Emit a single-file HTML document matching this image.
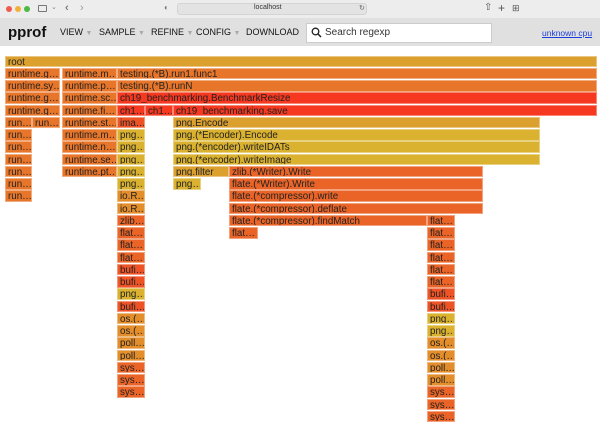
<!DOCTYPE html>
<html><head><meta charset="utf-8"><style>
*{margin:0;padding:0;box-sizing:border-box}
body{width:600px;height:428px;overflow:hidden;background:#fff;font-family:"Liberation Sans",sans-serif;position:relative}
.tb{position:absolute;left:0;top:0;width:600px;height:18px;background:#ededed}
.hd{position:absolute;left:0;top:18px;width:600px;height:28px;background:#e0e0e0}
.f{position:absolute;height:11.5px;font-size:9.8px;line-height:11.5px;padding-left:2px;color:#222;white-space:nowrap;overflow:hidden;border:0.5px solid rgba(255,255,255,.4)}
.t{position:absolute;font-size:9px;color:#111}
.m{position:absolute;top:27px;font-size:9px;color:#111}
.a{color:#aaa;font-size:7px}
</style></head><body>
<div class="tb"></div>
<div style="position:absolute;left:6px;top:6px;width:6px;height:6px;border-radius:50%;background:#ee5a50"></div>
<div style="position:absolute;left:15px;top:6px;width:6px;height:6px;border-radius:50%;background:#f2b03a"></div>
<div style="position:absolute;left:24px;top:6px;width:6px;height:6px;border-radius:50%;background:#4cb944"></div>
<div style="position:absolute;left:38px;top:5px;width:9px;height:7px;border:1px solid #777;border-radius:1px"></div>
<div class="t" style="left:51px;top:3px;color:#888;font-size:7px">⌄</div>
<div class="t" style="left:65px;top:2px;color:#555;font-size:11px">‹</div>
<div class="t" style="left:80px;top:2px;color:#999;font-size:11px">›</div>
<div class="t" style="left:164px;top:3px;color:#777;font-size:8px">◐</div>
<div style="position:absolute;left:177px;top:3px;width:190px;height:12px;background:#e3e3e3;border-radius:3px;border:0.5px solid #d4d4d4"></div>
<div class="t" style="left:254px;top:4px;font-size:7px;color:#333">localhost</div>
<div class="t" style="left:359px;top:4px;font-size:7px;color:#666">↻</div>
<div class="t" style="left:484px;top:2px;font-size:10px;color:#555">⇧</div>
<div class="t" style="left:498px;top:1px;font-size:12px;color:#555">+</div>
<div class="t" style="left:512px;top:3px;font-size:9px;color:#555">⊞</div>
<div class="hd"></div>
<div style="position:absolute;left:8px;top:24px;font-size:15px;font-weight:bold;color:#111">pprof</div>
<div class="m" style="left:60px">VIEW <span class="a">▼</span></div>
<div class="m" style="left:99px">SAMPLE <span class="a">▼</span></div>
<div class="m" style="left:151px">REFINE <span class="a">▼</span></div>
<div class="m" style="left:196px">CONFIG <span class="a">▼</span></div>
<div class="m" style="left:246px">DOWNLOAD</div>
<div style="position:absolute;left:306px;top:23px;width:186px;height:20px;background:#fff;border:0.5px solid #ccc"></div>
<svg style="position:absolute;left:311px;top:27px" width="11" height="11" viewBox="0 0 11 11"><circle cx="4.5" cy="4.5" r="3.3" fill="none" stroke="#222" stroke-width="1.3"/><path d="M7 7L10 10" stroke="#222" stroke-width="1.5"/></svg>
<div class="t" style="left:325px;top:27px;font-size:10px;color:#333">Search regexp</div>
<div class="t" style="left:542px;top:28px;font-size:8.5px;color:#1a3ed8;text-decoration:underline">unknown cpu</div>
<div id="g"></div>
<script>
var O='#e8762a',Y='#dab22f',A='#dca02f',R='#f5381f',F='#ea6427',B='#ee5326',M='#e38d2b';
var d=[
[0,5,597,'root',A],
[1,5,60,'runtime.g…',O],[1,62,117,'runtime.m…',O],[1,117,597,'testing.(*B).run1.func1',O],
[2,5,60,'runtime.sy…',O],[2,62,117,'runtime.p…',O],[2,117,597,'testing.(*B).runN',O],
[3,5,60,'runtime.g…',O],[3,62,117,'runtime.sc…',O],[3,117,597,'ch19_benchmarking.BenchmarkResize',R],
[4,5,60,'runtime.g…',O],[4,62,117,'runtime.fi…',O],[4,117,145,'ch1…',R],[4,145,173,'ch1…',R],[4,173,597,'ch19_benchmarking.save',R],
[5,5,32,'run…',O],[5,32,60,'run…',O],[5,62,117,'runtime.st…',O],[5,117,145,'ima…',B],[5,173,540,'png.Encode',A],
[6,62,117,'runtime.m…',O],[6,117,145,'png…',Y],[6,173,540,'png.(*Encoder).Encode',Y],
[7,62,117,'runtime.n…',O],[7,117,145,'png…',Y],[7,173,540,'png.(*encoder).writeIDATs',Y],
[8,62,117,'runtime.se…',O],[8,117,145,'png…',Y],[8,173,540,'png.(*encoder).writeImage',Y],
[9,62,117,'runtime.pt…',O],[9,117,145,'png…',Y],[9,173,229,'png.filter',A],[9,229,483,'zlib.(*Writer).Write',F],
[10,117,145,'png…',Y],[10,173,201,'png…',Y],[10,229,483,'flate.(*Writer).Write',F],
[11,117,145,'io.R…',M],[11,229,483,'flate.(*compressor).write',F],
[12,117,145,'io.R…',M],[12,229,483,'flate.(*compressor).deflate',F],
[13,117,145,'zlib…',F],[13,229,427,'flate.(*compressor).findMatch',F],[13,427,455,'flat…',F],
[14,117,145,'flat…',F],[14,229,258,'flat…',F],[14,427,455,'flat…',F],
[15,117,145,'flat…',F],[15,427,455,'flat…',F],
[16,117,145,'flat…',F],[16,427,455,'flat…',F],
[17,117,145,'bufi…',B],[17,427,455,'flat…',F],
[18,117,145,'bufi…',B],[18,427,455,'flat…',F],
[19,117,145,'png…',Y],[19,427,455,'bufi…',B],
[20,117,145,'bufi…',B],[20,427,455,'bufi…',B],
[21,117,145,'os.(…',M],[21,427,455,'png…',Y],
[22,117,145,'os.(…',M],[22,427,455,'png…',Y],
[23,117,145,'poll…',M],[23,427,455,'os.(…',M],
[24,117,145,'poll…',M],[24,427,455,'os.(…',M],
[25,117,145,'sys…',F],[25,427,455,'poll…',M],
[26,117,145,'sys…',F],[26,427,455,'poll…',M],
[27,117,145,'sys…',F],[27,427,455,'sys…',F],
[28,427,455,'sys…',F],[29,427,455,'sys…',F]];
for(var r=6;r<=11;r++)d.push([r,5,32,'run…',O]);
var h='';d.forEach(function(e){h+='<div class="f" style="top:'+(55.5+e[0]*12.25)+'px;left:'+e[1]+'px;width:'+(e[2]-e[1])+'px;background:'+e[4]+'">'+e[3]+'</div>'});
document.getElementById('g').innerHTML=h;
</script>
</body></html>
